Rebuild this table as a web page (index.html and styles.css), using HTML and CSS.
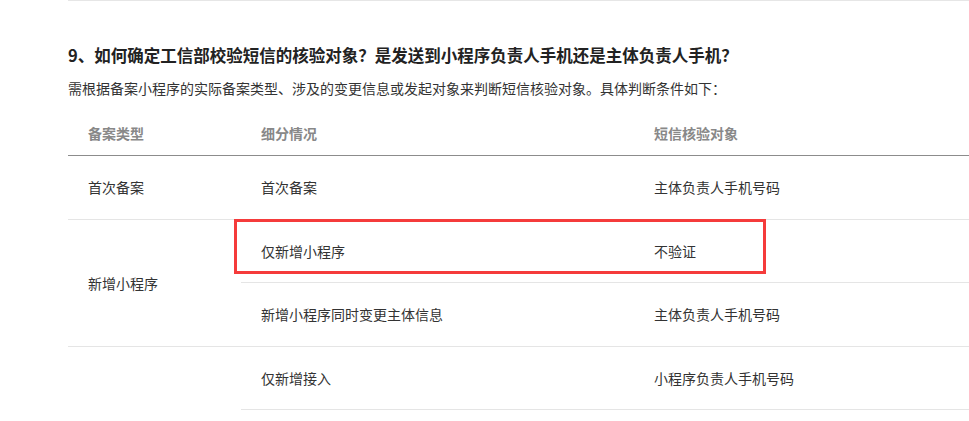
FILE: index.html
```html
<!DOCTYPE html>
<html lang="zh-CN">
<head>
    <meta charset="UTF-8">
    <title>小程序备案常见问题</title>
    <link rel="stylesheet" href="styles.css">
</head>
<body>
<div class="article">
    <div class="divider"></div>
    <h2 class="question">9、如何确定工信部校验短信的核验对象？是发送到小程序负责人手机还是主体负责人手机？</h2>
    <p class="answer">需根据备案小程序的实际备案类型、涉及的变更信息或发起对象来判断短信核验对象。具体判断条件如下：</p>
    <table class="rules">
        <colgroup>
            <col class="col-type">
            <col class="col-case">
            <col class="col-target">
        </colgroup>
        <thead>
        <tr>
            <th>备案类型</th>
            <th>细分情况</th>
            <th>短信核验对象</th>
        </tr>
        </thead>
        <tbody>
        <tr>
            <td>首次备案</td>
            <td>首次备案</td>
            <td>主体负责人手机号码</td>
        </tr>
        <tr class="short">
            <td rowspan="2">新增小程序</td>
            <td class="marked">
                仅新增小程序
                <span class="highlight"></span>
            </td>
            <td>不验证</td>
        </tr>
        <tr>
            <td>新增小程序同时变更主体信息</td>
            <td>主体负责人手机号码</td>
        </tr>
        <tr class="short">
            <td class="continue"></td>
            <td>仅新增接入</td>
            <td>小程序负责人手机号码</td>
        </tr>
        </tbody>
    </table>
</div>
</body>
</html>
```

FILE: styles.css
```css
* {
    margin: 0;
    padding: 0;
    box-sizing: border-box;
}

html, body {
    width: 100%;
    height: 100%;
    overflow: hidden;
    background: #fff;
}

body {
    font-family: "Noto Sans CJK SC", "Microsoft YaHei", sans-serif;
    color: #333;
    font-size: 14px;
}

.article {
    padding-left: 68px;
    width: 1200px;
}

.divider {
    border-top: 1px solid #e6e6e6;
}

.question {
    margin-top: 41px;
    font-size: 16.5px;
    line-height: 26px;
    font-weight: bold;
    color: #222;
}

.answer {
    margin-top: 9px;
    line-height: 22px;
    color: #333;
}

.rules {
    margin-top: 12px;
    width: 1060px;
    border-collapse: collapse;
    table-layout: fixed;
}

.rules .col-type {
    width: 173px;
}

.rules .col-case {
    width: 393px;
}

.rules th {
    text-align: left;
    font-weight: bold;
    color: #888;
    line-height: 21px;
    padding: 11.5px 20px 11px;
    border-bottom: 1px solid #8c8c8c;
}

.rules td {
    line-height: 21px;
    padding: 21px 20px;
    border-bottom: 1px solid #e5e5e5;
    vertical-align: middle;
}

.rules .short td {
    line-height: 20px;
}

.rules td.continue {
    border-bottom: none;
}

.rules td.marked {
    position: relative;
}

.highlight {
    position: absolute;
    left: -7px;
    top: -1px;
    width: 532px;
    height: 55px;
    border: 3px solid #f53b3b;
}
```
